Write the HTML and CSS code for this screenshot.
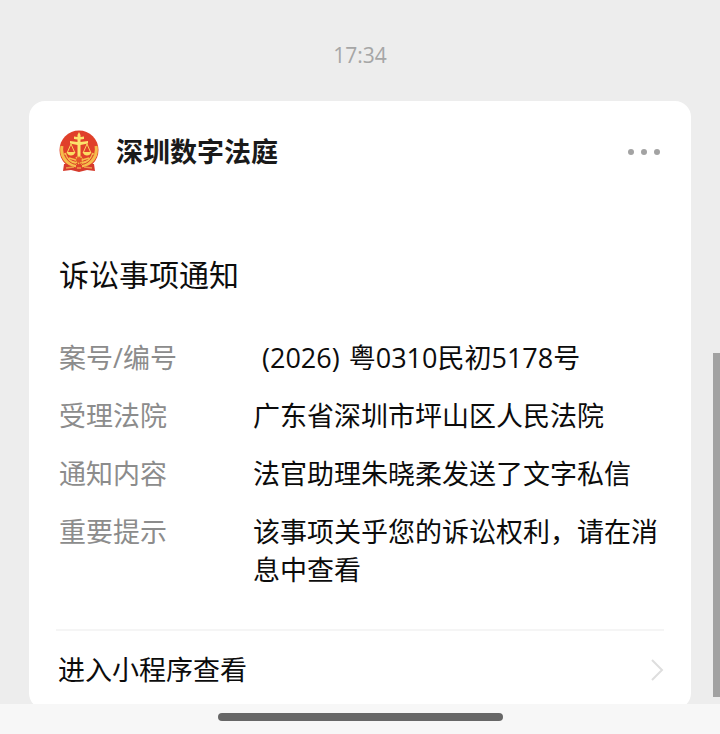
FILE: index.html
```html
<!DOCTYPE html>
<html lang="zh-CN">
<head>
  <meta charset="UTF-8">
  <meta name="viewport" content="width=device-width, initial-scale=1.0">
  <title>深圳数字法庭</title>
  <link rel="stylesheet" href="styles.css">
</head>
<body>
  <main class="chat">
    <time class="chat-time">17:34</time>

    <article class="card">
      <header class="card-header">
        <svg class="logo" viewBox="0 0 40 44" aria-hidden="true">
          <circle cx="20" cy="20" r="19.5" fill="#e0402a"/>
          <path d="M5 34 L4 41 L12 40 L20 42 L28 40 L36 41 L35 34 Z" fill="#d63a2c"/>
          <g fill="none" stroke="#f6bd4c">
            <path d="M3 16 C1 27 8 35 18 36" stroke-width="3"/>
            <path d="M37 16 C39 27 32 35 22 36" stroke-width="3"/>
            <path d="M6 23 C7 29 12 32 17 33 M34 23 C33 29 28 32 23 33" stroke-width="2"/>
            <path d="M10 28 L17 30 M30 28 L23 30" stroke-width="1.5"/>
            <path d="M6 25 C8 31 13 34 17 34.500 M34 25 C32 31 27 34 23 34.500" stroke="#dc4a2a" stroke-width="1"/>
          </g>
          <path d="M18.500 5 L20 2 L21.500 5 L21.500 7 L25 6.500 V9 L21.500 9.500 V12 L29 11 V13.500 L21.500 15 V27 H18.500 V15 L11 13.500 V11 L18.500 12 V9.500 L15 9 V6.500 L18.500 7 Z" fill="#fce36c"/>
          <path d="M12 14 L8.500 22 M12 14 L15.500 22 M28 14 L24.500 22 M28 14 L31.500 22" fill="none" stroke="#fbd35a" stroke-width="1"/>
          <path d="M7.500 22 H16.500 Q15 25.500 12 25.500 Q9 25.500 7.500 22 Z M23.500 22 H32.500 Q31 25.500 28 25.500 Q25 25.500 23.500 22 Z" fill="#fbdc62"/>
          <circle cx="20" cy="30" r="3.500" fill="#e2552a" stroke="#f5bd45" stroke-width="1.500" stroke-dasharray="1.500 1"/>
          <path d="M17 35 H23 V39 H17 Z" fill="#e0402a"/>
          <path d="M7 38 L15 37 M18 38 H22 M25 37 L33 38" fill="none" stroke="#ee9a4a" stroke-width="1.500"/>
        </svg>
        <h1 class="account">深圳数字法庭</h1>
        <button class="more" type="button" aria-label="更多">
          <svg viewBox="0 0 32 8" width="32" height="8" fill="#a3a3a3">
            <circle cx="3" cy="4" r="3"/>
            <circle cx="16" cy="4" r="3"/>
            <circle cx="29" cy="4" r="3"/>
          </svg>
        </button>
      </header>

      <h2 class="title">诉讼事项通知</h2>

      <dl class="details">
        <dt>案号/编号</dt>
        <dd><span class="open">(</span>2026<span class="close">)</span>粤0310民初5178号</dd>
        <dt>受理法院</dt>
        <dd>广东省深圳市坪山区人民法院</dd>
        <dt>通知内容</dt>
        <dd>法官助理朱晓柔发送了文字私信</dd>
        <dt>重要提示</dt>
        <dd>该事项关乎您的诉讼权利，请在消息中查看</dd>
      </dl>

      <a class="enter" href="#">
        <span>进入小程序查看</span>
        <svg viewBox="0 0 14 24" width="14" height="24" fill="none" stroke="#dedede" stroke-width="2">
          <path d="M2 2 L12 12 L2 22"/>
        </svg>
      </a>
    </article>

    <div class="scroll-thumb"></div>
  </main>

  <footer class="nav-bar">
    <div class="home-indicator"></div>
  </footer>
</body>
</html>
```
FILE: styles.css
```css
* {
  box-sizing: border-box;
}

body {
  display: flex;
  flex-direction: column;
  height: 100vh;
  margin: 0;
  background-color: #ededed;
  color: #0c0c0c;
  font-family: "Open Sans", "Noto Sans CJK SC", sans-serif;
  font-size: 27px;
  line-height: 38px;
}

.chat {
  position: relative;
  flex: 1;
  min-height: 0;
  padding: 36px 29px 0;
  overflow: hidden;
}

.chat-time {
  display: block;
  color: #a6a6a6;
  font-size: 21px;
  text-align: center;
}

.card {
  margin-top: 27px;
  padding: 29px 27px 0;
  border-radius: 16px;
  background-color: #fff;
}

.card-header {
  display: flex;
  align-items: center;
  padding: 0 4px 0 3px;
}

.logo {
  width: 40px;
  height: 44px;
}

.account {
  flex: 1;
  margin: 0 0 0 17px;
  color: #1a1a1a;
  font-size: 27px;
  font-weight: 700;
}

.more {
  display: flex;
  padding: 0;
  border: 0;
  background: none;
}

.title {
  margin: 79px 0 0 3px;
  font-size: 30px;
  font-weight: 400;
  line-height: 44px;
}

.details {
  display: grid;
  grid-template-columns: 194px 1fr;
  row-gap: 20px;
  margin: 42px 0 0;
  padding: 0 0 40px 3px;
}

.details dt {
  color: #8c8c8c;
}

.details dd {
  margin: 0;
}

.open {
  padding-left: 9px;
}

.close {
  padding-right: 9px;
}

.enter {
  display: flex;
  align-items: center;
  justify-content: space-between;
  padding: 20px 0 20px 2px;
  border-top: 2px solid #f5f5f5;
  color: inherit;
  text-decoration: none;
}

/* overlay scrollbar */
.scroll-thumb {
  position: absolute;
  top: 353px;
  right: 0;
  bottom: 7px;
  width: 7px;
  background-color: #a2a2a2;
}

.nav-bar {
  display: flex;
  justify-content: center;
  height: 30px;
  padding-top: 9px;
  background-color: #f7f7f7;
}

.home-indicator {
  width: 285px;
  height: 8px;
  border-radius: 4px;
  background-color: #676767;
}
```
